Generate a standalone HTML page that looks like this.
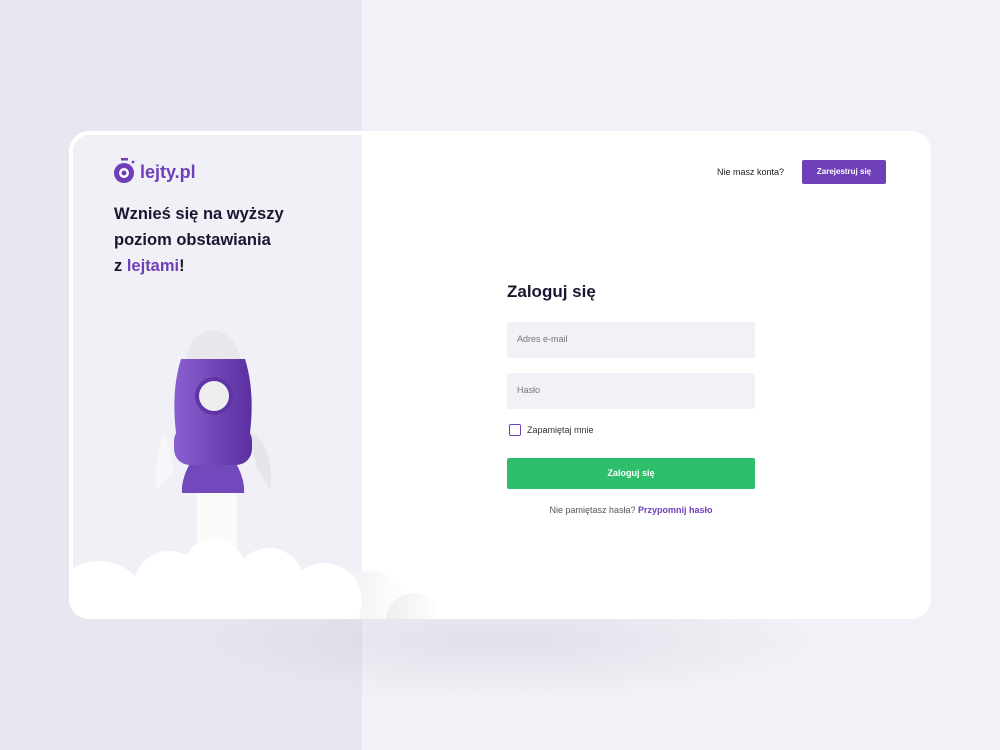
<!DOCTYPE html>
<html><head><meta charset="utf-8"><style>
*{margin:0;padding:0;box-sizing:border-box}
body{width:1000px;height:750px;overflow:hidden;background:#f2f1f7;font-family:"Liberation Sans",sans-serif;position:relative}
.leftbg{position:absolute;left:0;top:0;width:362px;height:750px;background:#e9e6f1}
.shadow{position:absolute;left:180px;top:580px;width:640px;height:120px;background:radial-gradient(ellipse at center,rgba(120,110,140,.14),rgba(120,110,140,0) 70%)}
.card{position:absolute;left:69px;top:131px;width:862px;height:488px;background:#fff;border-radius:20px;overflow:hidden}
.lp{position:absolute;left:4px;top:4px;width:289px;height:484px;background:#f1f0f6;border-radius:16px 0 0 16px}
.abs{position:absolute}
.h{font-weight:bold;color:#1c1530;font-size:16.5px;line-height:26px}
.in{position:absolute;left:438px;width:248px;height:36px;background:#f2f1f7;border-radius:2px;font-size:9px;color:#777;padding:12px 10px}
</style></head><body>
<div class="leftbg"></div>
<div class="shadow"></div>
<div class="card">
 <div class="lp"></div>
 <svg class="abs" style="left:44px;top:27px" width="24" height="26" viewBox="0 0 24 26"><rect x="8" y="0" width="7" height="2.5" fill="#6f3fba"/><circle cx="11" cy="15" r="10" fill="#6f3fba"/><circle cx="11" cy="15" r="5" fill="#fff"/><circle cx="11" cy="15" r="2.5" fill="#6f3fba"/><circle cx="20" cy="4" r="1.4" fill="#6f3fba"/></svg>
 <div class="abs" style="left:71px;top:31px;font-size:18px;font-weight:bold;color:#6f3fba">lejty.pl</div>
 <div class="abs h" style="left:45px;top:70px">Wznieś się na wyższy<br>poziom obstawiania<br>z <span style="color:#6f3fba">lejtami</span>!</div>
 <svg class="abs" style="left:0;top:190px" width="420" height="300" viewBox="0 0 420 300">
  <defs><linearGradient id="pg" x1="0" x2="1"><stop offset="0" stop-color="#8a5fd0"/><stop offset="1" stop-color="#5a30a0"/></linearGradient>
  <linearGradient id="cg" x1="0" x2="1"><stop offset="0" stop-color="#eeeef1"/><stop offset="1" stop-color="#fff"/></linearGradient></defs>
  <rect x="128" y="170" width="40" height="100" fill="#fafafb"/>
  <path d="M95 110 Q84 140 88 170 L105 148 Z" fill="#f7f7f9"/>
  <path d="M180 110 Q204 120 202 170 L188 148 Z" fill="#e6e6ea"/>
  <path d="M116 40 Q122 10 144 10 Q166 10 172 40 Z" fill="#e8e8ec"/>
  <path d="M112 38 L176 38 Q186 70 181 112 L107 112 Q102 70 112 38Z" fill="url(#pg)"/>
  <rect x="105" y="104" width="78" height="40" rx="16" fill="url(#pg)"/>
  <path d="M120 144 L168 144 Q176 160 175 172 L113 172 Q112 160 120 144 Z" fill="#7248bd"/>
  <circle cx="145" cy="75" r="19" fill="#5e34a6"/><circle cx="145" cy="75" r="15" fill="#eeeef0"/>
  <circle cx="300" cy="290" r="40" fill="url(#cg)"/>
  <circle cx="345" cy="300" r="28" fill="url(#cg)"/>
  <g fill="#fff">
   <circle cx="30" cy="290" r="50"/><circle cx="100" cy="265" r="35"/><circle cx="145" cy="250" r="32"/><circle cx="200" cy="262" r="35"/><circle cx="255" cy="280" r="38"/><rect x="0" y="265" width="290" height="35"/>
  </g>
 </svg>
 <div class="abs" style="left:648px;top:36px;font-size:9px;color:#222">Nie masz konta?</div>
 <div class="abs" style="left:733px;top:29px;width:84px;height:24px;background:#6f3fba;border-radius:2px;color:#fff;font-size:8px;font-weight:bold;text-align:center;line-height:24px">Zarejestruj się</div>
 <div class="abs" style="left:438px;top:151px;font-size:17px;font-weight:bold;color:#1c1530">Zaloguj się</div>
 <div class="in" style="top:191px">Adres e-mail</div>
 <div class="in" style="top:242px">Hasło</div>
 <div class="abs" style="left:440px;top:293px;width:12px;height:12px;border:1.5px solid #6f3fba;border-radius:2px"></div>
 <div class="abs" style="left:458px;top:294px;font-size:9px;color:#333">Zapamiętaj mnie</div>
 <div class="abs" style="left:438px;top:327px;width:248px;height:31px;background:#2ebf6c;border-radius:2px;color:#fff;font-size:9px;font-weight:bold;text-align:center;line-height:31px">Zaloguj się</div>
 <div class="abs" style="left:438px;top:374px;width:248px;text-align:center;font-size:9px;color:#555">Nie pamiętasz hasła? <b style="color:#6f3fba">Przypomnij hasło</b></div>
</div>
</body></html>
